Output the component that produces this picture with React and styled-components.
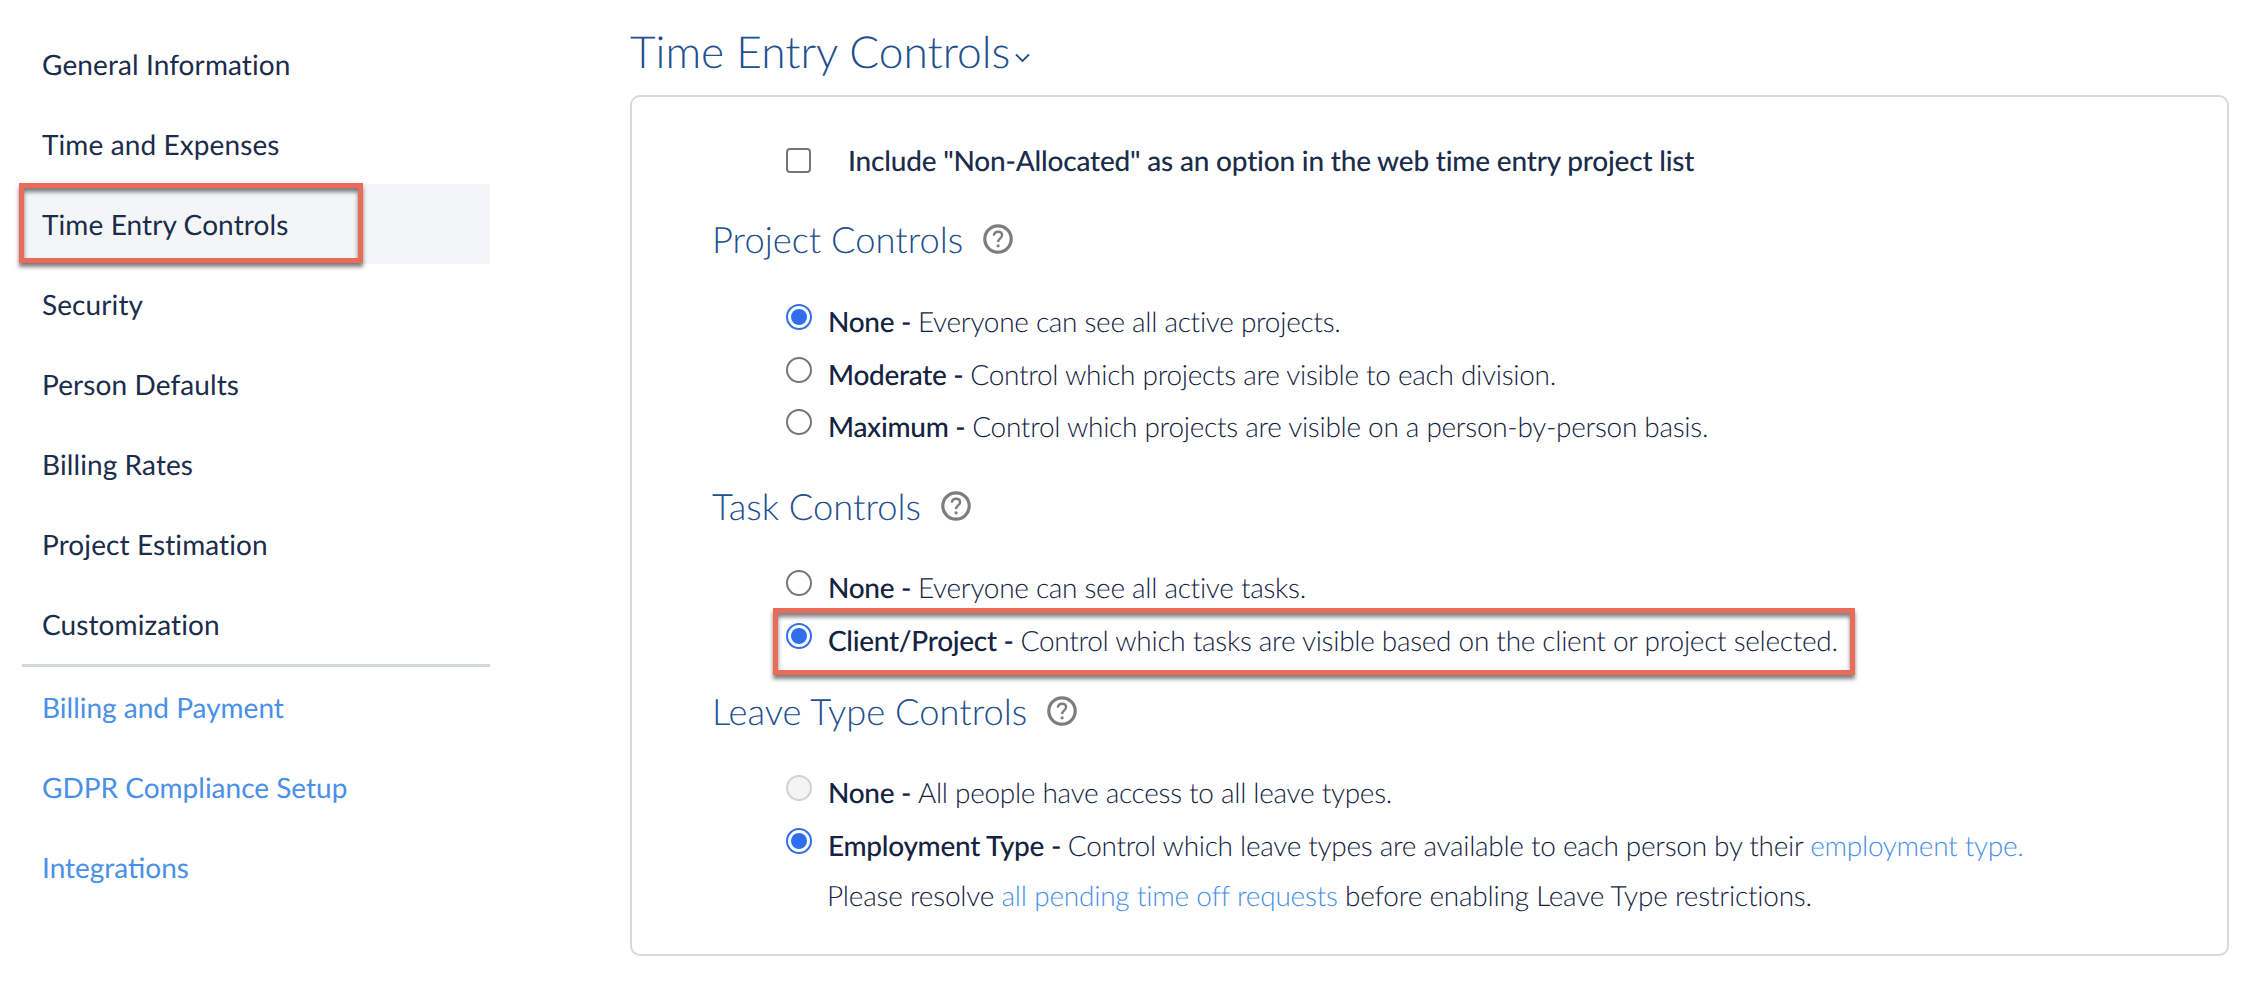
import React from 'react';
import styled, { createGlobalStyle } from 'styled-components';

const GlobalStyle = createGlobalStyle`
    html, body {
        margin: 0;
        padding: 0;
        background: #ffffff;
    }
    body {
        font-family: Lato, "Open Sans", sans-serif;
        color: #1b2d4b;
        text-rendering: geometricPrecision;
    }
`;

const Page = styled.div`
    display: flex;
    width: 2254px;
    height: 982px;
    overflow: hidden;
`;

// Sidebar
const Sidebar = styled.nav`
    width: 468px;
    margin-left: 22px;
    padding-top: 24px;
    flex-shrink: 0;
`;

const NavItem = styled.div`
    position: relative;
    display: flex;
    align-items: center;
    height: 80px;
    padding-left: 20px;
    font-size: 28px;
    font-weight: 400;
    letter-spacing: ${(p) => (p.$link ? '0' : '0.1px')};
    color: ${(p) => (p.$link ? '#4a90e8' : '#1b2d4b')};
    background: ${(p) => (p.$active ? '#f4f5f7' : 'transparent')};
`;

const Divider = styled.div`
    height: 3px;
    background: #d3d9e0;
`;

// Red annotation box drawn over the screenshot
const Callout = styled.div`
    position: absolute;
    box-sizing: border-box;
    top: ${(p) => p.$top}px;
    bottom: ${(p) => p.$bottom}px;
    left: ${(p) => p.$left}px;
    width: ${(p) => p.$width}px;
    border: 5px solid #ec6a5a;
    box-shadow: 0 4px 4px rgba(0, 0, 0, 0.5), inset 0 4px 4px rgba(0, 0, 0, 0.5);
    pointer-events: none;
`;

// Main column
const Main = styled.main`
    margin-left: 140px;
    width: 1599px;
    flex-shrink: 0;
`;

const Title = styled.h1`
    display: flex;
    align-items: center;
    height: 95px;
    margin: 0;
    padding-top: 7px;
    box-sizing: border-box;
    font-size: 44.3px;
    font-weight: 300;
    color: #22508f;
    svg {
        margin: 14px 0 0 5px;
    }
`;

const Panel = styled.section`
    box-sizing: border-box;
    height: 861px;
    padding: 43px 0 0 80px;
    border: 2px solid #d5dae0;
    border-radius: 10px;
`;

const CheckRow = styled.div`
    display: flex;
    align-items: center;
    height: 40px;
    padding-left: 74px;
    font-size: 28px;
    font-weight: 500;
    letter-spacing: -0.2px;
`;

const Checkbox = styled.span`
    width: 25px;
    height: 25px;
    box-sizing: border-box;
    margin-right: 37px;
    border: 2px solid #767676;
    border-radius: 4px;
`;

const SectionHead = styled.h2`
    display: flex;
    align-items: center;
    gap: 20px;
    height: 40px;
    margin: ${(p) => p.$top}px 0 ${(p) => p.$bottom}px;
    font-size: 36.3px;
    font-weight: 300;
    color: #22508f;
`;

const Option = styled.div`
    position: relative;
    display: flex;
    align-items: center;
    height: 52.5px;
    padding-left: 74px;
    font-size: 28px;
    font-weight: 300;
    letter-spacing: -0.29px;
    color: #14233f;
    white-space: pre;
`;

const Radio = styled.span`
    box-sizing: border-box;
    width: 26px;
    height: 26px;
    margin: 0 16px 8px 0;
    border-radius: 50%;
    border: 2px solid ${(p) => (p.$on ? '#2f6fed' : p.$disabled ? '#d2d2d2' : '#767676')};
    background: ${(p) => (p.$disabled ? '#f4f4f4' : '#ffffff')};
    display: flex;
    align-items: center;
    justify-content: center;
    &::after {
        content: '';
        display: ${(p) => (p.$on ? 'block' : 'none')};
        width: 16px;
        height: 16px;
        border-radius: 50%;
        background: #2f6fed;
    }
`;

const Strong = styled.span`
    font-weight: 500;
`;

const Link = styled.span`
    color: #4a90e8;
`;

const Note = styled.div`
    display: flex;
    align-items: center;
    height: 48px;
    padding-left: 115px;
    font-size: 28px;
    font-weight: 300;
    letter-spacing: -0.22px;
    color: #14233f;
    white-space: pre;
`;

const HelpIcon = () => (
    <svg width="30" height="30" viewBox="0 0 30 30" fill="none" stroke="#7d7d7d">
        <circle cx="15" cy="15" r="13.2" strokeWidth="3.2" />
        <path d="M10.8 11.6c.3-2.6 2-3.9 4.2-3.9 2.4 0 4.1 1.5 4.1 3.6 0 3-4 3.2-4 6.6" strokeWidth="2.4" />
        <circle cx="15.1" cy="21.8" r="1.6" fill="#7d7d7d" stroke="none" />
    </svg>
);

const Chevron = () => (
    <svg width="15" height="10" viewBox="0 0 15 10" fill="none" stroke="#22508f" strokeWidth="1.8">
        <path d="M1 1.5l6.5 6.5L14 1.5" />
    </svg>
);

const navTop = ['General Information', 'Time and Expenses', 'Time Entry Controls', 'Security', 'Person Defaults', 'Billing Rates', 'Project Estimation', 'Customization'];
const navBottom = ['Billing and Payment', 'GDPR Compliance Setup', 'Integrations'];

const App = () => {
    return (
        <>
            <GlobalStyle />
            <Page>
                <Sidebar>
                    {navTop.map((item) => (
                        <NavItem key={item} $active={item === 'Time Entry Controls'}>
                            {item}
                            {item === 'Time Entry Controls' && <Callout $top={-1} $bottom={1} $left={-3} $width={344} />}
                        </NavItem>
                    ))}
                    <Divider />
                    {navBottom.map((item) => (
                        <NavItem key={item} $link>{item}</NavItem>
                    ))}
                </Sidebar>
                <Main>
                    <Title>Time Entry Controls<Chevron /></Title>
                    <Panel>
                        <CheckRow>
                            <Checkbox />
                            Include "Non-Allocated" as an option in the web time entry project list
                        </CheckRow>

                        <SectionHead $top={39} $bottom={36}>Project Controls <HelpIcon /></SectionHead>
                        <Option><Radio $on /><Strong>None - </Strong>Everyone can see all active projects.</Option>
                        <Option><Radio /><Strong>Moderate - </Strong>Control which projects are visible to each division.</Option>
                        <Option><Radio /><Strong>Maximum - </Strong>Control which projects are visible on a person-by-person basis.</Option>

                        <SectionHead $top={33.5} $bottom={35}>Task Controls <HelpIcon /></SectionHead>
                        <Option><Radio /><Strong>None - </Strong>Everyone can see all active tasks.</Option>
                        <Option>
                            <Radio $on /><Strong>Client/Project - </Strong>Control which tasks are visible based on the client or project selected.
                            <Callout $top={-6} $bottom={-9} $left={61} $width={1082} />
                        </Option>

                        <SectionHead $top={25} $bottom={35}>Leave Type Controls <HelpIcon /></SectionHead>
                        <Option><Radio $disabled /><Strong>None - </Strong>All people have access to all leave types.</Option>
                        <Option><Radio $on /><Strong>Employment Type - </Strong>Control which leave types are available to each person by their <Link>employment type.</Link></Option>
                        <Note>Please resolve <Link>all pending time off requests</Link> before enabling Leave Type restrictions.</Note>
                    </Panel>
                </Main>
            </Page>
        </>
    );
};

export default App;
